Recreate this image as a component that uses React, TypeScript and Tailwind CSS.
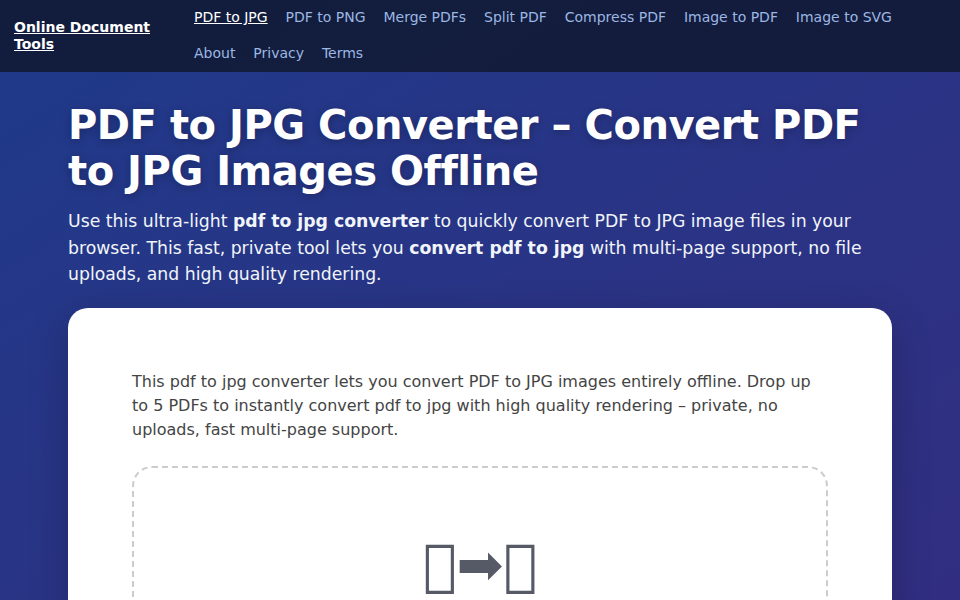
const LINKS_PRIMARY = ['PDF to JPG', 'PDF to PNG', 'Merge PDFs', 'Split PDF', 'Compress PDF', 'Image to PDF', 'Image to SVG'];
const LINKS_SECONDARY = ['About', 'Privacy', 'Terms'];

export default function App() {
  return (
    <div className="h-screen overflow-hidden bg-gradient-to-br from-[#1e3a8a] to-[#312e81] font-['DejaVu_Sans',sans-serif]">
      {/* Header */}
      <header className="flex h-[72px] bg-[#0f172a]/80 pl-[14px]">
        <a href="#" className="mt-[19px] h-fit w-[180px] text-[14px] leading-[17px] font-bold text-white underline">
          Online Document Tools
        </a>
        <nav className="flex flex-col">
          <div className="flex h-[35px] items-center gap-[17.9px] text-[14px] text-[#9bb7e3]">
            {LINKS_PRIMARY.map((label, i) => (
              <a key={label} href="#" className={i === 0 ? 'text-white underline' : ''}>
                {label}
              </a>
            ))}
          </div>
          <div className="flex h-[36px] items-center gap-[17.9px] text-[14px] text-[#9bb7e3]">
            {LINKS_SECONDARY.map((label) => (
              <a key={label} href="#">{label}</a>
            ))}
          </div>
        </nav>
      </header>

      <main className="px-[68px] pt-[30px]">
        <h1 className="text-[40px] leading-[46px] font-bold tracking-[-0.47px] text-white [text-shadow:0_2px_8px_rgba(0,0,0,0.25)]">
          PDF to JPG Converter – Convert PDF to JPG Images Offline
        </h1>
        <p className="mt-[14px] text-[17.28px] leading-[26.5px] text-[#f1f5f9]">
          Use this ultra-light <strong>pdf to jpg converter</strong> to quickly convert PDF to JPG image files in your
          browser. This fast, private tool lets you <strong>convert pdf to jpg</strong> with multi-page support, no file
          uploads, and high quality rendering.
        </p>

        {/* Card */}
        <section className="mt-[20px] rounded-[20px] bg-white px-[64px] pt-[62px] pb-[64px] shadow-[0_10px_40px_rgba(0,0,0,0.2)]">
          <p className="text-[16px] leading-[24px] text-[#444444]">
            This pdf to jpg converter lets you convert PDF to JPG images entirely offline. Drop up to 5 PDFs to instantly
            convert pdf to jpg with high quality rendering – private, no uploads, fast multi-page support.
          </p>
          <div className="mt-[24px] flex h-[300px] justify-center rounded-[20px] border-2 border-dashed border-[#cccccc] pt-[59px]">
            <span className="text-[56px] leading-[76px] text-[#555a66]">{'\u{E123}'}➡{'\u{E123}'}</span>
          </div>
        </section>
      </main>
    </div>
  );
}
